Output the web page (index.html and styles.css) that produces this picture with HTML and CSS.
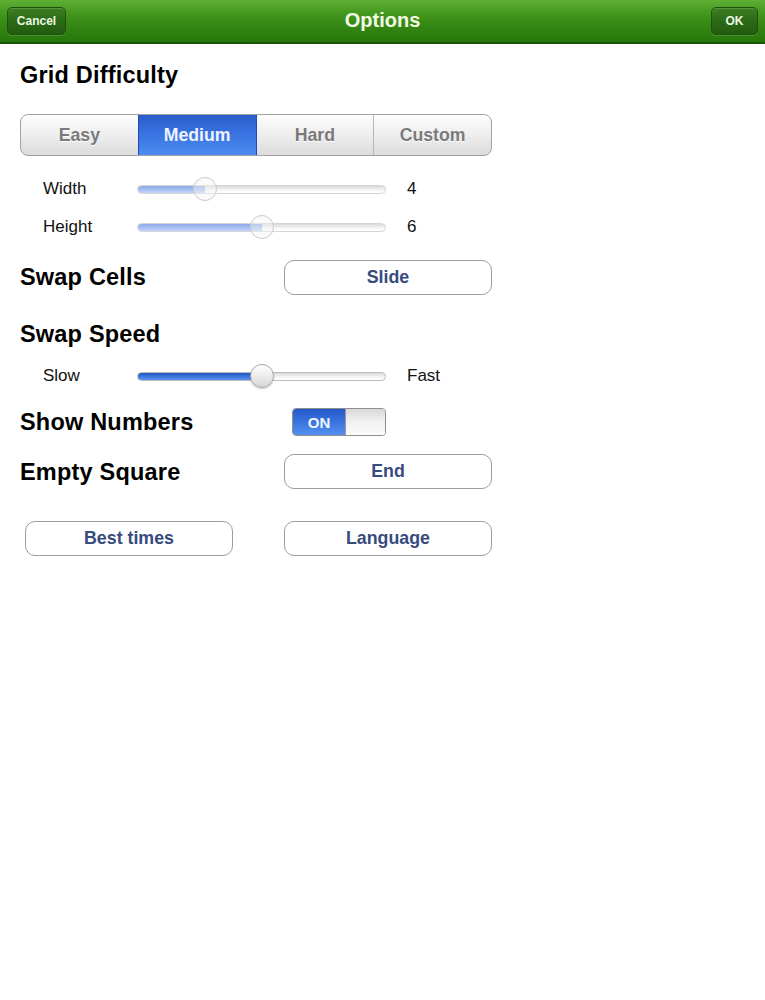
FILE: index.html
```html
<!DOCTYPE html>
<html>
<head>
<meta charset="utf-8">
<link rel="stylesheet" href="styles.css">
</head>
<body>
<header class="navbar">
  <button class="nav-btn cancel">Cancel</button>
  <div class="nav-title">Options</div>
  <button class="nav-btn ok">OK</button>
</header>
<main class="content">
  <div class="row title-row grid-title"><h2 class="heading">Grid Difficulty</h2></div>
  <div class="segmented">
    <div class="seg">Easy</div>
    <div class="seg active">Medium</div>
    <div class="seg">Hard</div>
    <div class="seg">Custom</div>
  </div>
  <div class="slider-row first">
    <span class="slider-label">Width</span>
    <div class="slider disabled">
      <div class="track"><div class="fill" style="width: 67px"></div></div>
      <div class="thumb" style="left: 56px"></div>
    </div>
    <span class="slider-value">4</span>
  </div>
  <div class="slider-row">
    <span class="slider-label">Height</span>
    <div class="slider disabled">
      <div class="track"><div class="fill" style="width: 124px"></div></div>
      <div class="thumb" style="left: 113px"></div>
    </div>
    <span class="slider-value">6</span>
  </div>
  <div class="row option-row swap-cells">
    <h2 class="heading">Swap Cells</h2>
    <button class="round-btn">Slide</button>
  </div>
  <div class="row title-row swap-speed"><h2 class="heading">Swap Speed</h2></div>
  <div class="slider-row speed-row">
    <span class="slider-label">Slow</span>
    <div class="slider">
      <div class="track"><div class="fill" style="width: 124px"></div></div>
      <div class="thumb" style="left: 113px"></div>
    </div>
    <span class="slider-value">Fast</span>
  </div>
  <div class="row option-row show-numbers">
    <h2 class="heading">Show Numbers</h2>
    <div class="toggle"><span class="toggle-on">ON</span><span class="toggle-knob"></span></div>
  </div>
  <div class="row option-row empty-square">
    <h2 class="heading">Empty Square</h2>
    <button class="round-btn">End</button>
  </div>
  <div class="bottom-buttons">
    <button class="round-btn">Best times</button>
    <button class="round-btn">Language</button>
  </div>
</main>
</body>
</html>
```

FILE: styles.css
```css
* { box-sizing: border-box; }
html, body {
  margin: 0;
  padding: 0;
  background: #ffffff;
  font-family: "Liberation Sans", Arial, Helvetica, sans-serif;
  color: #000;
}
.navbar {
  height: 44px;
  display: flex;
  align-items: center;
  justify-content: space-between;
  padding: 0 7px;
  position: relative;
  background: linear-gradient(to bottom, #5fae35 0%, #45991f 30%, #368a14 55%, #27770a 100%);
  border-bottom: 2px solid #1b560a;
}
.nav-title {
  position: absolute;
  left: 0;
  right: 0;
  top: 0;
  bottom: 0;
  display: flex;
  align-items: center;
  justify-content: center;
  color: #f2fae6;
  font-size: 20px;
  font-weight: bold;
  pointer-events: none;
  padding-bottom: 1px;
}
.nav-btn {
  position: relative;
  z-index: 1;
  height: 28px;
  margin-top: -1px;
  border: 1px solid #1f520d;
  border-radius: 5px;
  background: linear-gradient(to bottom, #3d7f24 0%, #2b6a16 50%, #225c10 100%);
  box-shadow: inset 0 1px 0 rgba(255,255,255,0.15), 0 1px 0 rgba(255,255,255,0.15);
  color: #eef8e2;
  font-family: "Liberation Sans", Arial, sans-serif;
  font-weight: bold;
  font-size: 12px;
  padding: 0;
}
.cancel { width: 59px; }
.ok { width: 47px; }

.content {
  padding: 15px 0 0 20px;
}
.row {
  display: flex;
  align-items: center;
}
.heading {
  margin: 0;
  font-size: 23.5px;
  font-weight: bold;
  line-height: 26px;
  letter-spacing: 0.2px;
}
.title-row { height: 32px; }
.segmented {
  margin-top: 23px;
  width: 472px;
  height: 42px;
  display: flex;
  border: 1px solid #a3a3a3;
  border-radius: 8px;
  overflow: hidden;
  background: linear-gradient(to bottom, #fdfdfd 0%, #eeeeee 50%, #dcdcdc 100%);
}
.seg {
  flex: 1;
  display: flex;
  align-items: center;
  justify-content: center;
  font-size: 17.7px;
  font-weight: bold;
  color: #7a7a7a;
  border-left: 1px solid #b5b5b5;
  text-shadow: 0 1px 0 #fff;
}
.seg:first-child { border-left: none; }
.seg.active {
  background: linear-gradient(to bottom, #2a5ccc 0%, #3872e0 45%, #4c8cf0 100%);
  color: #eef3fe;
  border-left: 1px solid #1f4cb0;
  text-shadow: none;
}
.seg.active + .seg { border-left: 1px solid #1f4cb0; }

.slider-row {
  display: flex;
  align-items: center;
  height: 38px;
  padding-left: 23px;
}
.slider-row.first { margin-top: 14px; }
.slider-label {
  width: 94px;
  font-size: 17px;
  color: #111;
}
.slider {
  position: relative;
  width: 249px;
  height: 24px;
  display: flex;
  align-items: center;
}
.track {
  width: 100%;
  height: 9px;
  border-radius: 5px;
  border: 1px solid #bdbdbd;
  background: linear-gradient(to bottom, #d9d9d9 0%, #f7f7f7 60%, #ffffff 100%);
  overflow: hidden;
}
.fill {
  height: 100%;
  background: linear-gradient(to bottom, #1f54bd 0%, #3a76dc 50%, #5b92ec 100%);
}
.thumb {
  position: absolute;
  top: 0;
  width: 24px;
  height: 24px;
  border-radius: 50%;
  border: 1px solid #a8a8a8;
  background: linear-gradient(to bottom, #ffffff 0%, #e8e8e8 60%, #d5d5d5 100%);
  box-shadow: 0 1px 2px rgba(0,0,0,0.2);
}
.slider.disabled .track { border-color: #d5d5d5; }
.slider.disabled .fill {
  background: linear-gradient(to bottom, #8eaae8 0%, #a8c0f2 55%, #c3d4f7 100%);
}
.slider.disabled .thumb {
  background: rgba(245,245,245,0.45);
  border-color: #c9c9c9;
  box-shadow: none;
}
.slider-value {
  margin-left: 21px;
  font-size: 17px;
  color: #111;
}
.speed-row { margin-top: 7px; }

.option-row {
  justify-content: space-between;
  width: 472px;
}
.swap-cells { margin-top: 13px; height: 36px; }
.swap-speed { margin-top: 23px; }
.show-numbers { margin-top: 10px; height: 34px; }
.empty-square { margin-top: 15px; height: 35px; }

.round-btn {
  width: 208px;
  height: 35px;
  border: 1px solid #9c9c9c;
  border-radius: 10px;
  background: #ffffff;
  color: #374b7f;
  font-family: "Liberation Sans", Arial, sans-serif;
  font-weight: bold;
  font-size: 17.8px;
  padding: 0;
}
.toggle {
  width: 94px;
  height: 28px;
  margin-right: 106px;
  display: flex;
  border: 1px solid #8f8f8f;
  border-radius: 4px;
  overflow: hidden;
}
.toggle-on {
  width: 53px;
  display: flex;
  align-items: center;
  justify-content: center;
  background: linear-gradient(to bottom, #2458c6 0%, #3a74e0 50%, #5590ee 100%);
  color: #f0f5ff;
  font-size: 15px;
  font-weight: bold;
  border-right: 1px solid #9a9a9a;
}
.toggle-knob {
  flex: 1;
  background: linear-gradient(to bottom, #d8d8d8 0%, #f0f0f0 45%, #fbfbfb 100%);
}
.bottom-buttons {
  margin-top: 32px;
  margin-left: 5px;
  width: 467px;
  display: flex;
  justify-content: space-between;
}
```
